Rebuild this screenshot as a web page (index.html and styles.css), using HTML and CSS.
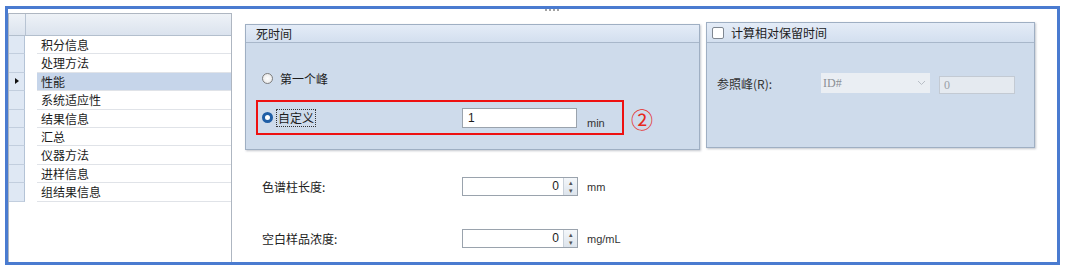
FILE: index.html
```html
<!DOCTYPE html>
<html lang="zh">
<head>
    <meta charset="UTF-8">
    <meta name="viewport" content="width=device-width, initial-scale=1.0">
    <title>性能</title>
    <link rel="stylesheet" href="styles.css">
</head>
<body>
    <div class="frame">
        <div class="grid">
            <div class="grid-head"><div class="rh"></div><div class="hd"></div></div>
            <div class="row"><div class="rh"></div><div class="cell">积分信息</div></div>
            <div class="row"><div class="rh"></div><div class="cell">处理方法</div></div>
            <div class="row sel"><div class="rh"><span class="arrow"></span></div><div class="cell">性能</div></div>
            <div class="row"><div class="rh"></div><div class="cell">系统适应性</div></div>
            <div class="row"><div class="rh"></div><div class="cell">结果信息</div></div>
            <div class="row"><div class="rh"></div><div class="cell">汇总</div></div>
            <div class="row"><div class="rh"></div><div class="cell">仪器方法</div></div>
            <div class="row"><div class="rh"></div><div class="cell">进样信息</div></div>
            <div class="row"><div class="rh"></div><div class="cell">组结果信息</div></div>
        </div>

        <div class="main">
            <span class="grip"></span>
            <div class="boxes">
                <div class="group dead">
                    <div class="group-head">死时间</div>
                    <div class="group-body">
                        <div class="radio-row"><span class="radio"></span>第一个峰</div>
                        <div class="custom-line">
                            <div class="custom-row">
                                <span class="radio on"></span>
                                <span class="focus">自定义</span>
                                <div class="text-input">1</div>
                                <span class="unit">min</span>
                            </div>
                            <span class="badge">②</span>
                        </div>
                    </div>
                </div>
                <div class="group rel">
                    <div class="group-head"><span class="check"></span>计算相对保留时间</div>
                    <div class="group-body">
                        <div class="ref-row">
                            <span class="ref-label">参照峰(R):</span>
                            <div class="combo">ID#
                                <svg width="9" height="6" viewBox="0 0 9 6"><path d="M1 1 L4.5 4.5 L8 1" fill="none" stroke="#b8bec6" stroke-width="1"/></svg>
                            </div>
                            <div class="num-box">0</div>
                        </div>
                    </div>
                </div>
            </div>

            <div class="field first">
                <span class="field-label">色谱柱长度:</span>
                <div class="spin"><span class="spin-val">0</span><span class="spin-btn"><i>▴</i><i>▾</i></span></div>
                <span class="field-unit">mm</span>
            </div>
            <div class="field second">
                <span class="field-label">空白样品浓度:</span>
                <div class="spin"><span class="spin-val">0</span><span class="spin-btn"><i>▴</i><i>▾</i></span></div>
                <span class="field-unit">mg/mL</span>
            </div>
        </div>
    </div>
</body>
</html>
```

FILE: styles.css
```css
body {
    margin: 0;
    background: #ffffff;
    font-family: "Noto Sans CJK SC", "Liberation Sans", sans-serif;
    font-size: 12px;
    color: #1c1c1c;
}
.frame {
    margin: 6px 0 0 5px;
    width: 1055px;
    height: 259px;
    box-sizing: border-box;
    border: 3px solid #4a7bd0;
    display: flex;
}

/* left grid */
.grid {
    width: 224px;
    margin-top: 4px;
    box-sizing: border-box;
    border: 1px solid #aeb6c1;
    border-bottom: none;
    display: flex;
    flex-direction: column;
}
.grid-head {
    height: 21px;
    display: flex;
    border-bottom: 1px solid #b3bfcd;
    background: linear-gradient(#eef2f7, #dbe3ee);
}
.grid-head .rh {
    width: 16px;
    border-right: 1px solid #b8c4d3;
}
.grid-head .hd {
    flex: 1;
}
.row {
    height: 18.4px;
    display: flex;
}
.row .rh {
    width: 16px;
    margin-right: 12px;
    box-sizing: border-box;
    background: #dfe8f4;
    border-right: 1px solid #b4c3d6;
    border-bottom: 1px solid #c2cede;
    display: flex;
    align-items: center;
    justify-content: center;
}
.row .cell {
    flex: 1;
    padding-left: 4px;
    box-sizing: border-box;
    border-bottom: 1px solid #e0e3e8;
    line-height: 17px;
}
.row.sel .cell {
    background: #c6d5ea;
}
.arrow {
    width: 0;
    height: 0;
    border-top: 3px solid transparent;
    border-bottom: 3px solid transparent;
    border-left: 4px solid #111;
}

/* right panel */
.main {
    flex: 1;
    position: relative;
    padding-left: 13px;
}
.grip {
    position: absolute;
    left: 313px;
    top: 0;
    width: 14px;
    border-top: 2px dotted #a3a3a3;
}
.boxes {
    display: flex;
    gap: 6px;
    margin-top: 13px;
    align-items: flex-start;
}
.group {
    box-sizing: border-box;
    height: 126px;
    border: 1px solid #9fafc3;
    background: #cedbeb;
    box-shadow: 1px 1px 2px rgba(80, 90, 110, 0.35);
}
.group-head {
    height: 17px;
    border-bottom: 1px solid #a8b7ca;
    background: linear-gradient(#e4ecf7, #d3dfef);
    padding-left: 10px;
    line-height: 17px;
    display: flex;
    align-items: center;
}
.dead {
    width: 455px;
    margin-top: 2px;
}
.rel {
    width: 329px;
}
.rel .group-head {
    height: 19px;
    padding-left: 5px;
}
.dead .group-body {
    padding-left: 10px;
}
.radio-row {
    margin-top: 27px;
    height: 16px;
    padding-left: 6px;
    display: flex;
    align-items: center;
}
.radio {
    width: 11px;
    height: 11px;
    box-sizing: border-box;
    border-radius: 50%;
    border: 1px solid #7d7d7d;
    background: radial-gradient(#ffffff, #e2e2e2);
    margin-right: 7px;
}
.radio.on {
    border: 3px solid #1f5ea6;
    background: #ffffff;
    margin-right: 3px;
}
.custom-line {
    margin-top: 14px;
    display: flex;
    align-items: center;
}
.custom-row {
    width: 368px;
    height: 35px;
    box-sizing: border-box;
    border: 2px solid #ee1111;
    padding-left: 4px;
    display: flex;
    align-items: center;
}
.focus {
    border: 1px dotted #333;
    padding: 0 1px;
    line-height: 16px;
}
.text-input {
    margin-left: auto;
    width: 115px;
    height: 20px;
    box-sizing: border-box;
    border: 1px solid #9aa3ad;
    background: #ffffff;
    padding-left: 5px;
    line-height: 18px;
    font-family: "Liberation Sans", sans-serif;
}
.unit {
    width: 35px;
    margin-left: 10px;
    margin-top: 10px;
    font-family: "Liberation Sans", sans-serif;
    font-size: 11px;
    color: #333;
}
.badge {
    margin-left: 7px;
    color: #e62a1f;
    font-size: 22px;
    line-height: 22px;
}
.check {
    width: 12px;
    height: 12px;
    box-sizing: border-box;
    border: 1px solid #7f8791;
    border-radius: 2px;
    background: #ffffff;
    margin-right: 7px;
}
.ref-row {
    margin-top: 29px;
    padding-left: 10px;
    display: flex;
    align-items: center;
}
.ref-label {
    width: 104px;
    color: #333;
}
.combo {
    width: 109px;
    height: 20px;
    box-sizing: border-box;
    background: #eaeef3;
    padding: 0 4px 0 2px;
    font-family: "Liberation Serif", serif;
    color: #8a8f96;
    display: flex;
    justify-content: space-between;
    align-items: center;
}
.num-box {
    width: 76px;
    height: 18px;
    margin-left: 9px;
    margin-top: 4px;
    box-sizing: border-box;
    border: 1px solid #c3cad3;
    background: #e5eaf0;
    padding-left: 4px;
    line-height: 16px;
    color: #9aa0a8;
    font-family: "Liberation Serif", serif;
}

/* fields */
.field {
    padding-left: 17px;
    display: flex;
    align-items: center;
}
.field.first {
    margin-top: 27px;
}
.field.second {
    margin-top: 33px;
}
.field-label {
    width: 200px;
    color: #222;
}
.spin {
    width: 116px;
    height: 19px;
    box-sizing: border-box;
    border: 1px solid #9aa3ad;
    background: #ffffff;
    display: flex;
}
.spin-val {
    flex: 1;
    text-align: right;
    padding-right: 4px;
    line-height: 17px;
    font-family: "Liberation Sans", sans-serif;
}
.spin-btn {
    width: 13px;
    border-left: 1px solid #c9d1da;
    background: linear-gradient(#f4f7fa, #dde4ec);
    display: flex;
    flex-direction: column;
    align-items: center;
    font-style: normal;
}
.spin-btn i {
    font-style: normal;
    font-size: 7px;
    line-height: 8px;
    color: #555;
}
.field-unit {
    margin-left: 9px;
    font-family: "Liberation Sans", sans-serif;
    font-size: 11px;
    color: #333;
}
```
